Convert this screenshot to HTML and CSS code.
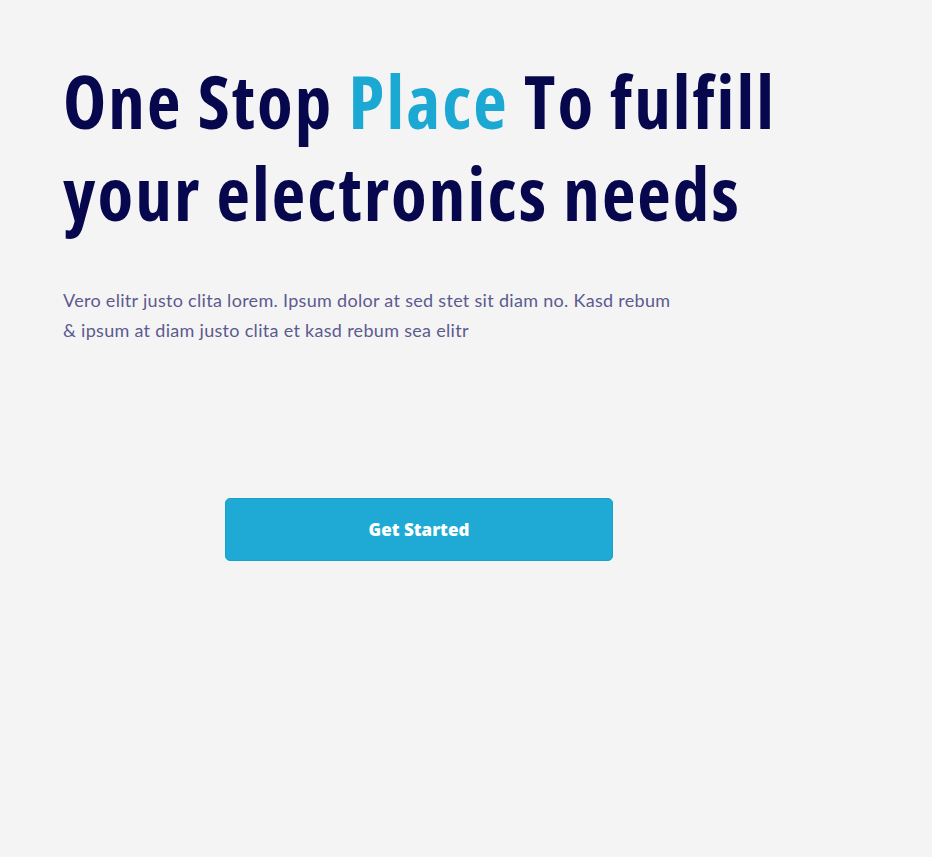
FILE: index.html
```html
<!DOCTYPE html>
<html lang="en">
<head>
<meta charset="utf-8">
<title>One Stop Place</title>
<link rel="stylesheet" href="styles.css">
</head>
<body>
<section class="hero">
  <h1 class="hero-title">One Stop <span class="accent">Place</span> To fulfill your electronics needs</h1>
  <p class="hero-text">Vero elitr justo clita lorem. Ipsum dolor at sed stet sit diam no. Kasd rebum &amp; ipsum at diam justo clita et kasd rebum sea elitr</p>
  <div class="hero-actions">
    <a class="btn-primary" href="#">Get Started</a>
  </div>
</section>
</body>
</html>
```
FILE: styles.css
```css
html, body {
  margin: 0;
  padding: 0;
  background: #f4f4f4;
}
.hero {
  padding: 55px 0 0 63px;
  width: 760px;
}
.hero-title {
  margin: 0;
  font-family: "Open Sans", sans-serif;
  font-stretch: 75%;
  font-weight: 750;
  font-size: 73px;
  letter-spacing: 2.1px;
  line-height: 92px;
  color: #07074d;
}
.accent {
  color: #1ba9d3;
}
.hero-text {
  margin: 46px 0 0;
  width: 620px;
  font-family: "Lato", sans-serif;
  font-size: 18px;
  letter-spacing: 0.3px;
  line-height: 30px;
  color: #5c5b8f;
}
.hero-actions {
  padding: 153px 0 0 162px;
}
.btn-primary {
  display: flex;
  align-items: center;
  justify-content: center;
  box-sizing: border-box;
  width: 388px;
  height: 63px;
  border-radius: 5px;
  background: #1eaad4;
  border: 1px solid #16a2cc;
  color: #ffffff;
  font-family: "Open Sans", sans-serif;
  font-weight: 800;
  font-size: 17px;
  text-decoration: none;
}
```
